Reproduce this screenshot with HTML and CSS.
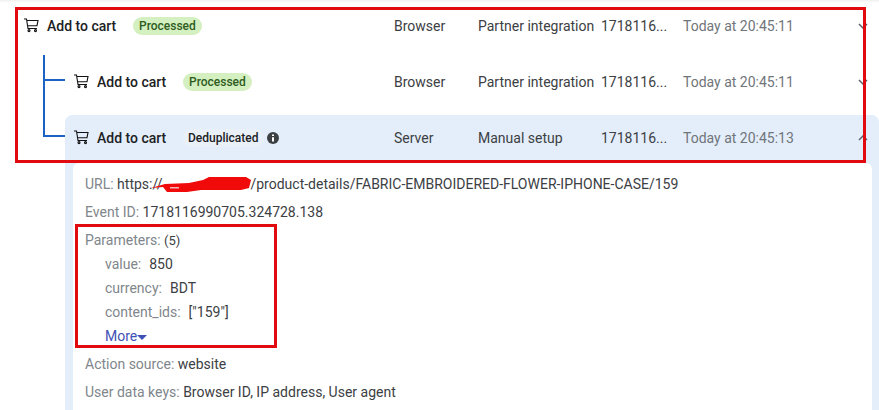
FILE: index.html
```html
<!DOCTYPE html>
<html lang="en">
<head>
    <meta charset="UTF-8">
    <meta name="viewport" content="width=device-width, initial-scale=1.0">
    <title>Event list</title>
    <link rel="stylesheet" href="styles.css">
</head>
<body>

<div class="event-row first">
    <svg class="cart" viewBox="0 0 16 16"><path d="M1 2h2.500l1.500 9.500h9M3.700 3.500H15l-1 5.200H4.500"/><circle cx="6" cy="13.600" r="1"/><circle cx="12.500" cy="13.600" r="1"/></svg>
    <div class="event-name">Add to cart</div>
    <div class="status"><span class="badge">Processed</span></div>
    <div>Browser</div>
    <div>Partner integration</div>
    <div>1718116...</div>
    <div class="time">Today at 20:45:11</div>
    <svg class="chevron" viewBox="0 0 10 6"><path d="M1 1l4 4 4-4"/></svg>
</div>

<div class="event-row child">
    <svg class="cart" viewBox="0 0 16 16"><path d="M1 2h2.500l1.500 9.500h9M3.700 3.500H15l-1 5.200H4.500"/><circle cx="6" cy="13.600" r="1"/><circle cx="12.500" cy="13.600" r="1"/></svg>
    <div class="event-name">Add to cart</div>
    <div class="status"><span class="badge">Processed</span></div>
    <div>Browser</div>
    <div>Partner integration</div>
    <div>1718116...</div>
    <div class="time">Today at 20:45:11</div>
    <svg class="chevron" viewBox="0 0 10 6"><path d="M1 1l4 4 4-4"/></svg>
</div>

<div class="open-event">
    <div class="event-row child selected">
        <svg class="cart" viewBox="0 0 16 16"><path d="M1 2h2.500l1.500 9.500h9M3.700 3.500H15l-1 5.200H4.500"/><circle cx="6" cy="13.600" r="1"/><circle cx="12.500" cy="13.600" r="1"/></svg>
        <div class="event-name">Add to cart</div>
        <div class="status">
            <span class="badge plain">Deduplicated</span>
            <svg class="info" viewBox="0 0 12 12"><circle cx="6" cy="6" r="6"/><path d="M5 5.200h2v4.300H5zM5 2.500h2v1.600H5z"/></svg>
        </div>
        <div>Server</div>
        <div>Manual setup</div>
        <div>1718116...</div>
        <div class="time">Today at 20:45:13</div>
        <svg class="chevron" viewBox="0 0 10 6"><path d="M1 5l4-4 4 4"/></svg>
    </div>

    <div class="details">
        <p><span class="key">URL:</span> https://<svg class="scribble" viewBox="0 0 90 15"><path d="M-10 11L4 7l24-1 14-3 6-3h37l5 3-2 8-8 2-40 0-14 2H6l-4-5z"/><path class="fleck" d="M9 10h9v1.500H9z"/></svg>/product-details/FABRIC-EMBROIDERED-FLOWER-IPHONE-CASE/159</p>
        <p><span class="key">Event ID:</span> 1718116990705.324728.138</p>
        <div class="params">
            <p class="param-title"><span class="key">Parameters:</span> <span class="count">(5)</span></p>
            <p class="param"><span class="key">value:</span>850</p>
            <p class="param"><span class="key">currency:</span>BDT</p>
            <p class="param"><span class="key">content_ids:</span>["159"]</p>
            <p class="param more">More<span class="caret"></span></p>
        </div>
        <p><span class="key">Action source:</span> website</p>
        <p><span class="key">User data keys:</span> Browser ID, IP address, User agent</p>
    </div>
</div>

<div class="tree-line"></div>
<div class="tree-branch top-branch"></div>
<div class="tree-branch low-branch"></div>
<div class="mark mark-rows"></div>
<div class="mark mark-params"></div>

</body>
</html>
```

FILE: styles.css
```css
body {
    font-family: Roboto, Arial, sans-serif;
    font-size: 14px;
    color: #3c4043;
    background-color: white;
    margin: 0;
    height: 410px;
    overflow: hidden;
    position: relative;
    box-shadow: inset 0 4px 3px -3px rgba(0, 0, 0, 0.08);
}
p {
    margin: 0;
}
.event-row {
    display: grid;
    grid-template-columns: 23px 86px 261px 84px 123px 82px 1fr 16px;
    align-items: center;
    height: 56px;
    padding: 0 8px 0 24px;
    white-space: nowrap;
}
.event-row.first {
    height: 52px;
    margin-bottom: 2px;
}
.event-row.child {
    margin-left: 65px;
    padding-left: 9px;
    grid-template-columns: 23px 86px 211px 84px 123px 82px 1fr 16px;
}
.event-row.selected {
    margin-left: 0;
    height: 46px;
    background-color: #e4eefb;
    border-radius: 8px 8px 0 0;
}
.event-name {
    color: #202124;
    font-weight: 500;
}
.status {
    display: flex;
    align-items: center;
    gap: 3px;
}
.cart {
    width: 16px;
    height: 16px;
    margin: -2px 0 0 -1px;
    fill: none;
    stroke: #111;
    stroke-width: 1.1;
}
.badge {
    background-color: #d4efc0;
    color: #2f5d1e;
    font-size: 12px;
    font-weight: 500;
    line-height: 18px;
    padding: 0 6px;
    border-radius: 9px;
}
.badge.plain {
    background-color: #eaf0f8;
    color: #202124;
    padding: 0 6px 0 5px;
}
.info {
    width: 12px;
    height: 12px;
    fill: #3c4043;
}
.info path {
    fill: white;
}
.time {
    color: #70757a;
}
.chevron {
    width: 10px;
    height: 6px;
    margin-left: 3px;
    fill: none;
    stroke: #5f6368;
    stroke-width: 1.5;
}
.open-event {
    background-color: #e4eefb;
    margin: 5px 0 0 65px;
    padding: 0 7px 0 8px;
    height: 295px;
    border-radius: 8px 8px 0 0;
}
.open-event .event-row.selected {
    margin: 0 -7px 2px -8px;
}
.details {
    background-color: white;
    border-radius: 6px 6px 0 0;
    padding: 7px 12px 0;
    height: 247px;
    box-sizing: border-box;
}
.details p {
    line-height: 28px;
    white-space: nowrap;
}
.params {
    padding: 2px 0;
}
.params p {
    line-height: 24px;
}
.params .param-title {
    margin-bottom: -1px;
}
.key {
    color: #80868b;
}
.count {
    font-size: 13px;
}
.details .param {
    padding-left: 20px;
}
.param .key {
    margin-right: 8px;
}
.details .more {
    color: #3f51b5;
}
.caret {
    display: inline-block;
    border: 5px solid transparent;
    border-top: 5px solid #3f51b5;
    border-bottom: 0;
    vertical-align: 1px;
}
.scribble {
    width: 90px;
    height: 15px;
    margin: 0 -1px;
    vertical-align: -3px;
    overflow: visible;
    fill: #f00a0a;
}
.scribble .fleck {
    fill: #f7b4b4;
}
.tree-line {
    position: absolute;
    left: 43px;
    top: 55px;
    width: 2px;
    height: 82px;
    background-color: #1a63c4;
}
.tree-branch {
    position: absolute;
    left: 43px;
    width: 22px;
    height: 2px;
    background-color: #1a63c4;
}
.top-branch {
    top: 79px;
}
.low-branch {
    top: 135px;
}
.mark {
    position: absolute;
    border: 3px solid #e00a0f;
    box-sizing: border-box;
}
.mark-rows {
    left: 15px;
    top: 7px;
    width: 851px;
    height: 156px;
}
.mark-params {
    left: 75px;
    top: 224px;
    width: 202px;
    height: 124px;
}
```
